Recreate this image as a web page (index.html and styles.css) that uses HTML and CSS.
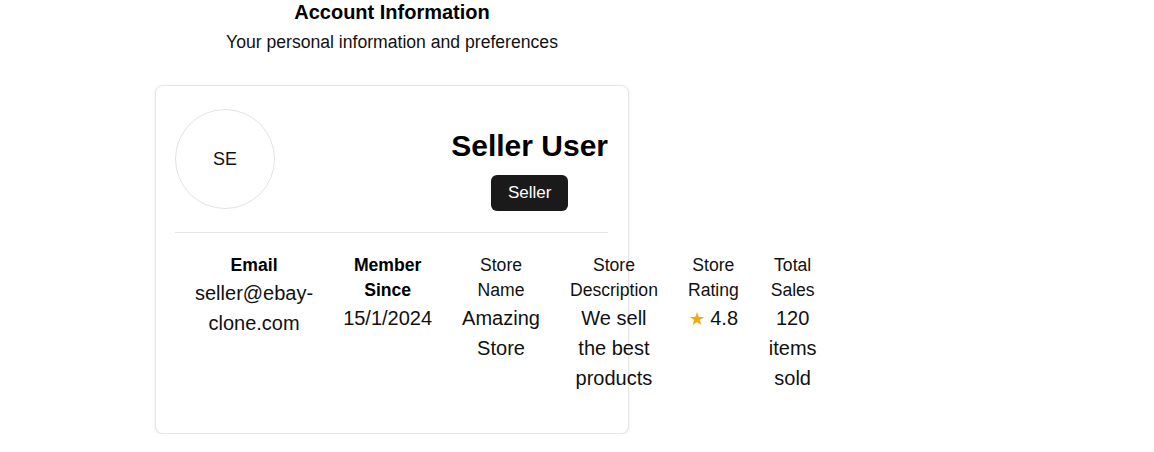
FILE: index.html
```html
<!DOCTYPE html>
<html lang="en">
<head>
<meta charset="utf-8">
<title>Account Information</title>
<link rel="stylesheet" href="styles.css">
</head>
<body>
<div class="account">
  <div class="account-head">
    <h1 class="account-title">Account Information</h1>
    <p class="account-sub">Your personal information and preferences</p>
  </div>
  <div class="card">
    <div class="profile">
      <div class="avatar">SE</div>
      <div class="identity">
        <h2 class="name">Seller User</h2>
        <span class="badge">Seller</span>
      </div>
    </div>
    <div class="details">
      <div class="field">
        <div class="label strong">Email</div>
        <div class="value">seller@ebay-clone.com</div>
      </div>
      <div class="field">
        <div class="label strong">Member Since</div>
        <div class="value">15/1/2024</div>
      </div>
      <div class="field">
        <div class="label">Store Name</div>
        <div class="value">Amazing Store</div>
      </div>
      <div class="field">
        <div class="label">Store Description</div>
        <div class="value">We sell the best products</div>
      </div>
      <div class="field">
        <div class="label">Store Rating</div>
        <div class="value nowrap"><span class="star">★</span> 4.8</div>
      </div>
      <div class="field">
        <div class="label">Total Sales</div>
        <div class="value">120 items sold</div>
      </div>
    </div>
  </div>
</div>
</body>
</html>
```

FILE: styles.css
```css
* { box-sizing: border-box; }

body {
  margin: 0;
  background: #ffffff;
  color: #111111;
  font-family: "Liberation Sans", Arial, sans-serif;
}

.account {
  width: 474px;
  margin-left: 155px;
}

.account-head {
  text-align: center;
  margin-bottom: 31px;
}

.account-title {
  margin: 0 0 6px;
  font-size: 20px;
  line-height: 24px;
  font-weight: 700;
  color: #000;
}

.account-sub {
  margin: 0;
  font-size: 17.6px;
  line-height: 24px;
  color: #111;
}

.card {
  border: 1px solid #e6e6e6;
  border-radius: 8px;
  box-shadow: 0 1px 4px rgba(0, 0, 0, 0.08);
  padding: 23px 20px 20px 19px;
  background: #fff;
}

.profile {
  display: flex;
  justify-content: space-between;
  align-items: flex-start;
  padding-bottom: 21px;
  border-bottom: 1px solid #e5e5e5;
}

.avatar {
  width: 100px;
  height: 100px;
  border-radius: 50%;
  border: 1px solid #e3e3e3;
  display: flex;
  align-items: center;
  justify-content: center;
  font-size: 18px;
  color: #111;
}

.identity {
  display: flex;
  flex-direction: column;
  align-items: center;
  padding-top: 19px;
  gap: 12px;
}

.name {
  margin: 0;
  font-size: 30px;
  line-height: 35px;
  font-weight: 700;
  color: #000;
}

.badge {
  background: #1a1a1a;
  color: #fff;
  border-radius: 6px;
  padding: 8px 17px;
  font-size: 17px;
  line-height: 20px;
}

.details {
  display: flex;
  gap: 30px;
  padding: 20px 20px 20px;
}

.field {
  text-align: center;
}

.label {
  font-size: 17.6px;
  line-height: 25px;
  color: #111;
}

.label.strong {
  font-weight: 700;
  color: #000;
}

.value {
  font-size: 20px;
  line-height: 30px;
  color: #111;
}

.value.nowrap {
  white-space: nowrap;
}

.star {
  color: #f2a900;
  font-size: 18px;
}
```
